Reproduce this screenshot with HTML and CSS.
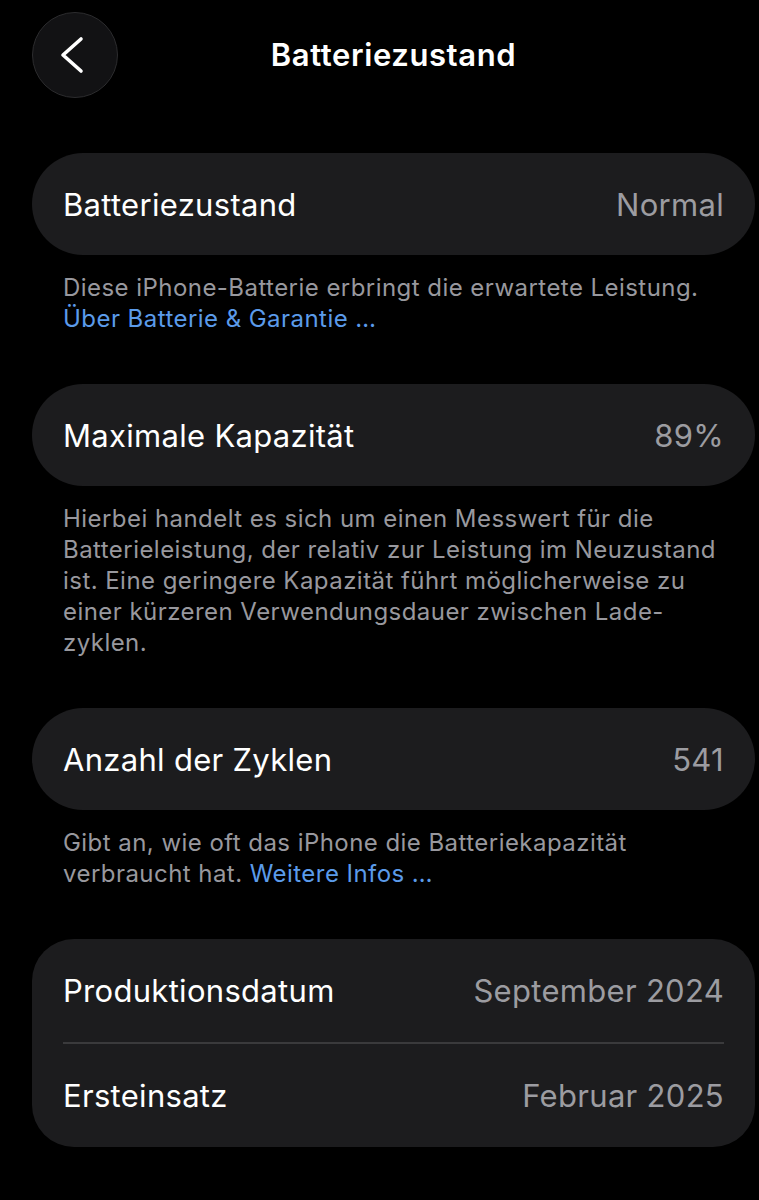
FILE: index.html
```html
<!DOCTYPE html>
<html lang="de">
<head>
    <meta charset="UTF-8">
    <meta name="viewport" content="width=device-width, initial-scale=1.0">
    <title>Batteriezustand</title>
    <link rel="stylesheet" href="styles.css">
</head>
<body>
    <div class="header">
        <button class="back-button" type="button" aria-label="Zurück">
            <svg width="28" height="40" viewBox="0 0 28 40">
                <path d="M22 4 L4 20 L22 36" fill="none" stroke="#ffffff" stroke-width="3.6" stroke-linecap="round" stroke-linejoin="round"/>
            </svg>
        </button>
        <div class="title">Batteriezustand</div>
    </div>

    <div class="content">
        <div class="card">
            <div class="row">
                <span class="label">Batteriezustand</span>
                <span class="value">Normal</span>
            </div>
        </div>
        <div class="footer-text">
            Diese iPhone-Batterie erbringt die erwartete Leistung.<br>
            <a href="#">Über Batterie &amp; Garantie …</a>
        </div>

        <div class="card">
            <div class="row">
                <span class="label">Maximale Kapazität</span>
                <span class="value">89%</span>
            </div>
        </div>
        <div class="footer-text">
            Hierbei handelt es sich um einen Messwert für die<br>
            Batterieleistung, der relativ zur Leistung im Neuzustand<br>
            ist. Eine geringere Kapazität führt möglicherweise zu<br>
            einer kürzeren Verwendungsdauer zwischen Lade-<br>
            zyklen.
        </div>

        <div class="card">
            <div class="row">
                <span class="label">Anzahl der Zyklen</span>
                <span class="value">541</span>
            </div>
        </div>
        <div class="footer-text">
            Gibt an, wie oft das iPhone die Batteriekapazität<br>
            verbraucht hat. <a href="#">Weitere Infos …</a>
        </div>

        <div class="card card-group">
            <div class="row">
                <span class="label">Produktionsdatum</span>
                <span class="value">September 2024</span>
            </div>
            <div class="separator"></div>
            <div class="row">
                <span class="label">Ersteinsatz</span>
                <span class="value">Februar 2025</span>
            </div>
        </div>
    </div>
</body>
</html>
```

FILE: styles.css
```css
body {
    font-family: Inter, "Noto Sans", sans-serif;
    margin: 0;
    padding: 0;
    background-color: #000000;
    color: #ffffff;
    overflow-x: hidden;
}
.header {
    height: 110px;
    padding: 12px 0 0 32px;
    box-sizing: border-box;
    display: flex;
    align-items: flex-start;
    position: relative;
}
.back-button {
    width: 86px;
    height: 86px;
    border-radius: 50%;
    background-color: #121214;
    border: 1px solid #2c2c2e;
    display: flex;
    align-items: center;
    justify-content: center;
    padding: 0 4px 0 0;
    cursor: pointer;
    box-sizing: border-box;
}
.title {
    position: absolute;
    left: 0;
    right: 0;
    top: 36px;
    text-align: center;
    font-size: 31px;
    font-weight: 600;
    line-height: 38px;
    padding-left: 28px;
    letter-spacing: 0.6px;
}
.content {
    padding: 43px 4px 40px 32px;
}
.card {
    background-color: #1c1c1e;
    border-radius: 51px;
    padding: 0 31px;
}
.card-group {
    border-radius: 42px;
}
.row {
    height: 102px;
    display: flex;
    align-items: center;
    justify-content: space-between;
    font-size: 31px;
    letter-spacing: 0.3px;
}
.card-group .row {
    height: 103px;
}
.label {
    color: #ffffff;
}
.value {
    color: #9c9ca1;
}
.separator {
    height: 2px;
    background-color: #3a3a3c;
}
.footer-text {
    padding: 17px 0 50px 31px;
    font-size: 24px;
    line-height: 31px;
    letter-spacing: 0.45px;
    color: #98989e;
    white-space: nowrap;
}
.footer-text a {
    color: #5b9bea;
    text-decoration: none;
}
```
